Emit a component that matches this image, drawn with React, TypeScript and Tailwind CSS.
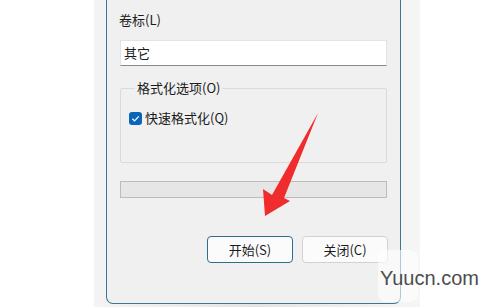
const font = { fontFamily: '"Noto Sans CJK SC", "Noto Sans", sans-serif' };

export default function App() {
  return (
    <div className="relative w-[490px] h-[307px] overflow-hidden bg-white" style={font}>
      {/* shadow around the dialog */}
      <div className="absolute left-[94px] top-0 w-[326px] h-[307px] bg-gradient-to-r from-[#f4f4f4] via-[#e4e4e4] to-[#f6f6f6]" />

      <div className="relative ml-[106px] w-[295px] h-[304px] bg-[#f0f0f0] border-x border-b border-[#3b7791] rounded-b-[7px] px-[12px] text-[13px] text-[#1b1b1b] flex flex-col">
        <div className="mt-[11px] h-[18px] leading-[18px]">卷标(L)</div>

        <div className="mt-[11px] ml-[1px] w-[267px] h-[26px] bg-white border border-[#e3e3e3] border-b-[#8a8a8a] flex items-center px-[3px]">
          其它
        </div>

        <fieldset className="mt-[13px] ml-[1px] w-[267px] h-[84px] border border-[#dadada] rounded-[2px] px-[8px]">
          <legend className="ml-[6px] px-[2px] leading-[18px]">格式化选项(O)</legend>
          <div className="mt-[12px] flex items-center gap-[3px]">
            <div className="w-[13px] h-[13px] rounded-[3px] bg-[#0a64b8] flex items-center justify-center">
              <svg width="9" height="9" viewBox="0 0 10 10">
                <path d="M1.5 5.2 L4 7.6 L8.6 2.6" fill="none" stroke="white" strokeWidth="1.4" />
              </svg>
            </div>
            <span className="leading-[18px]">快速格式化(Q)</span>
          </div>
        </fieldset>

        <div className="mt-[18px] ml-[1px] w-[267px] h-[17px] bg-[#e6e6e6] border border-[#bcbcbc]" />

        <div className="mt-[38px] flex justify-end gap-[9px]">
          <button className="w-[86px] h-[27px] bg-[#fbfbfb] border-[1.5px] border-[#2c6e8c] rounded-[4px] leading-none">
            开始(S)
          </button>
          <button className="w-[86px] h-[27px] bg-[#fbfbfb] border border-[#d2d2d2] rounded-[4px] leading-none">
            关闭(C)
          </button>
        </div>
      </div>

      {/* red arrow */}
      <svg className="absolute left-0 top-0" width="490" height="307" viewBox="0 0 490 307">
        <polygon points="318,113 284,198 290,201 265,216 263,189 272,195" fill="#f02c2c" />
      </svg>

      {/* watermark */}
      <div className="absolute left-[378px] top-[250px] w-[40px] h-[52px] rounded-[8px] bg-white/60" />
      <div
        className="absolute left-[380px] top-[265px] text-[20px] leading-[26px] text-[#4d4d4d]"
        style={{ fontFamily: '"Liberation Sans", Arial, sans-serif' }}
      >
        Yuucn.com
      </div>
    </div>
  );
}
